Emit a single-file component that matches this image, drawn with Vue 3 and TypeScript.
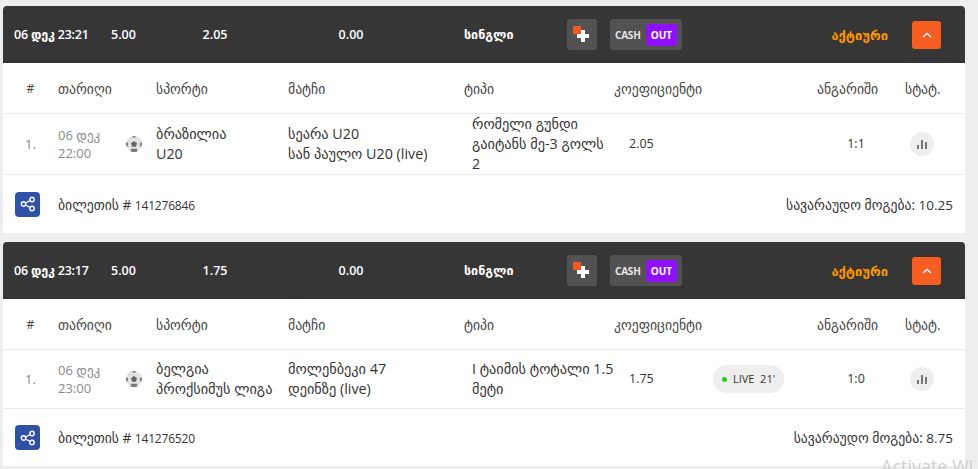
<script setup lang="ts">
interface Ticket {
  head: string
  total: string
  hold: string
  date: string[]
  sport: string[]
  match: string[]
  type: string[]
  odds: string
  live: string
  score: string
  ticket: string
  win: string
  variant: string
}
const columns = ['#', 'თარიღი', '', 'სპორტი', 'მატჩი', 'ტიპი', 'კოეფიციენტი', '', 'ანგარიში', 'სტატ.']
const tickets: Ticket[] = [
  {
    head: '06 დეკ 23:21', total: '2.05', hold: '0.00',
    date: ['06 დეკ', '22:00'], sport: ['ბრაზილია', 'U20'],
    match: ['სეარა U20', 'სან პაულო U20 (live)'],
    type: ['რომელი გუნდი', 'გაიტანს მე-3 გოლს', '2'],
    odds: '2.05', live: '', score: '1:1', ticket: '141276846', win: '10.25', variant: 'first'
  },
  {
    head: '06 დეკ 23:17', total: '1.75', hold: '0.00',
    date: ['06 დეკ', '23:00'], sport: ['ბელგია', 'პროქსიმუს ლიგა'],
    match: ['მოლენბეკი 47', 'დეინზე (live)'],
    type: ['I ტაიმის ტოტალი 1.5', 'მეტი'],
    odds: '1.75', live: 'LIVE  21\'', score: '1:0', ticket: '141276520', win: '8.75', variant: 'second'
  }
]
</script>

<template>
  <div class="page">
    <section v-for="t in tickets" :key="t.ticket" class="card" :class="t.variant">
      <header class="head">
        <span class="h-date">{{ t.head }}</span>
        <span class="h-stake">5.00</span>
        <span class="h-total">{{ t.total }}</span>
        <span class="h-hold">{{ t.hold }}</span>
        <span class="h-kind">სინგლი</span>
        <button class="plus" aria-label="add">
          <svg width="18" height="18" viewBox="0 0 18 18">
            <rect x="0" y="0" width="8" height="8" fill="#f15a22" />
            <path d="M8 4h4v4h4v4h-4v4H8v-4H4V8h4z" fill="#fff" />
          </svg>
        </button>
        <div class="cash"><span class="c-word">CASH</span><span class="c-out">OUT</span></div>
        <span class="status">აქტიური</span>
        <button class="up" aria-label="collapse">
          <svg width="10" height="6" viewBox="0 0 10 6"><path d="M1 5l4-3.600L9 5" fill="none" stroke="#fff" stroke-width="1.400" /></svg>
        </button>
      </header>

      <div class="grid thead">
        <span v-for="(c, i) in columns" :key="i" :class="'col' + i">{{ c }}</span>
      </div>

      <div class="grid row">
        <span class="col0 muted">1.</span>
        <span class="col1 muted"><span v-for="d in t.date" :key="d" class="line">{{ d }}</span></span>
        <span class="col2">
          <svg width="16" height="16" viewBox="0 0 16 16">
            <circle cx="8" cy="8" r="8" fill="#e2e2e2" />
            <path d="M8 5l3 2.200-1.100 3.500H6.100L5 7.200z" fill="#666" />
            <path d="M5.500 .6L8 2l2.500-1.400A8 8 0 0 0 5.500 .6zM.3 6l2 1.400-.6 3-1.300-.5A8 8 0 0 1 .3 6zM15.700 6l-2 1.400.6 3 1.300-.5A8 8 0 0 0 15.700 6zM4.500 15.200l.8-2.400h5.400l.8 2.400a8 8 0 0 1-7 0z" fill="#777" />
          </svg>
        </span>
        <span class="col3"><span v-for="s in t.sport" :key="s" class="line">{{ s }}</span></span>
        <span class="col4"><span v-for="m in t.match" :key="m" class="line">{{ m }}</span></span>
        <span class="col5 type"><span v-for="x in t.type" :key="x" class="line">{{ x }}</span></span>
        <span class="col6 odds">{{ t.odds }}</span>
        <span class="col7"><span v-if="t.live" class="live"><i class="dot"></i>{{ t.live }}</span></span>
        <span class="col8 score">{{ t.score }}</span>
        <span class="col9 stat-cell">
          <span class="stat">
            <svg width="10" height="9" viewBox="0 0 10 9"><path d="M0 5h2v4H0zM4 0h2v9H4zM8 2h2v7H8z" fill="#777" /></svg>
          </span>
        </span>
      </div>

      <footer class="foot">
        <button class="share" aria-label="share">
          <svg width="16" height="16" viewBox="0 0 16 16" fill="none" stroke="#fff" stroke-width="1.400">
            <circle cx="12" cy="3.500" r="2.200" /><circle cx="12" cy="12.500" r="2.200" /><circle cx="3.500" cy="8" r="2.200" />
            <path d="M5.500 7l4.600-2.500M5.500 9l4.600 2.500" />
          </svg>
        </button>
        <span class="ticket">ბილეთის # <span class="num">{{ t.ticket }}</span></span>
        <span class="win">სავარაუდო მოგება: <b>{{ t.win }}</b></span>
      </footer>
    </section>
    <span class="watermark">Activate Wi</span>
  </div>
</template>

<style>
html, body { margin: 0; overflow: hidden; background: #eee; }
</style>

<style scoped>
.page {
  position: relative;
  height: 469px;
  overflow: hidden;
  box-sizing: border-box;
  padding: 6px 13px 0 3px;
  display: flex;
  flex-direction: column;
  gap: 9px;
  font-family: "Open Sans", "DejaVu Sans", sans-serif;
  font-size: 14px;
  color: #333;
}
.card { background: #fff; border-radius: 4px 4px 0 0; }
.head {
  height: 57px;
  background: #363636;
  border-radius: 4px 4px 0 0;
  display: grid;
  grid-template-columns: 97px 64px 80px 192px 120px 43px 72px 1fr 29px;
  padding: 0 24px 0 11px;
  align-items: center;
  color: #fff;
  font-weight: 600;
  font-size: 12.500px;
}
.h-date { white-space: nowrap; font-size: 12.500px; letter-spacing: -.2px; }
.h-total, .h-hold { text-align: center; }
.h-kind { padding-left: 17px; }
.plus {
  width: 30px; height: 31px; border: 0; padding: 0;
  background: #525252; border-radius: 3px;
  display: flex; align-items: center; justify-content: center;
}
.cash {
  width: 72px; height: 31px; box-sizing: border-box;
  background: #525252; border-radius: 3px;
  display: flex; align-items: center; justify-content: space-between;
  padding: 0 5px;
  font-size: 10px; font-weight: 700;
}
.c-word { color: #e6e6e6; letter-spacing: -.2px; }
.c-out {
  width: 31px; height: 22px;
  background: #8f10ff; border-radius: 3px;
  display: flex; align-items: center; justify-content: center;
}
.status { text-align: right; padding-right: 24px; color: #ff9900; font-size: 13px; font-weight: 700; }
.up {
  width: 29px; height: 28px; border: 0; padding: 0;
  background: #f55d22; border-radius: 3px;
  display: flex; align-items: center; justify-content: center;
}
.grid {
  display: grid;
  grid-template-columns: 55px 68px 30px 132px 176px 150px 99px 104px 88px 60px;
  align-items: center;
}
.thead { height: 50px; font-size: 13.700px; color: #444; white-space: nowrap; }
.thead .col0 { font-size: 12px; }
.col0 { text-align: center; }
.row {
  border-top: 1px solid #ececec;
  border-bottom: 1px solid #ececec;
  font-size: 14.300px;
  line-height: 20px;
  box-sizing: border-box;
  white-space: nowrap;
}
.first .row { height: 62px; }
.second .row { height: 60px; }
.line { display: block; }
.muted { color: #8a8a8a; font-size: 13px; line-height: 18.500px; }
.col2 { display: flex; }
.type { padding-left: 8px; }
.odds { padding-left: 15px; font-size: 12.500px; }
.score { text-align: center; font-size: 12.500px; padding-right: 10px; }
.stat-cell { display: flex; padding-left: 5px; }
.stat {
  width: 24px; height: 24px; border-radius: 50%;
  background: #eee;
  display: flex; align-items: center; justify-content: center;
}
.live {
  width: 71px; height: 28px;
  background: #eee; border-radius: 14px;
  display: flex; align-items: center; justify-content: center;
  font-size: 11px;
  white-space: pre;
}
.dot { width: 5px; height: 5px; border-radius: 50%; background: #1fd50b; margin-right: 6px; }
.foot {
  display: flex; align-items: center;
  box-sizing: border-box;
  padding: 0 12px;
  font-size: 13.700px;
  color: #333;
}
.first .foot { height: 58px; }
.second .foot { height: 57px; }
.share {
  width: 25px; height: 25px; border: 0; padding: 0;
  background: #2f52a5; border-radius: 4px;
  display: flex; align-items: center; justify-content: center;
}
.ticket { margin-left: 18px; }
.num { font-size: 12px; letter-spacing: -.2px; }
.win { margin-left: auto; }
.win b { font-weight: 400; font-size: 13.500px; }
.watermark {
  position: absolute;
  left: 881px;
  top: 454px;
  color: #d0d0d0;
  font-size: 18px;
  font-family: "Open Sans", sans-serif;
  white-space: nowrap;
}
</style>
